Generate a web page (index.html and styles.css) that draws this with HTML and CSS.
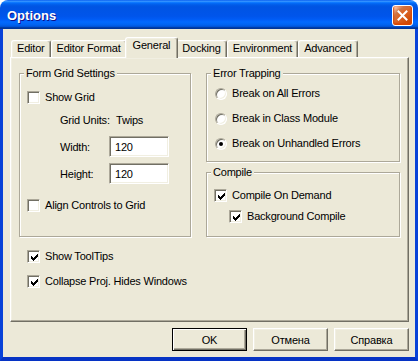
FILE: index.html
```html
<!DOCTYPE html>
<html lang="en">
<head>
    <meta charset="UTF-8">
    <title>Options</title>
    <link rel="stylesheet" href="styles.css">
</head>
<body>

    <div class="window">
        <div class="titlebar">
            <span class="title">Options</span>
            <button class="close-btn" aria-label="Close">
                <svg width="11" height="11" viewBox="0 0 11 11"><path d="M1.5 1.5l8 8M9.5 1.5l-8 8" stroke="#fff" stroke-width="2" stroke-linecap="square"/></svg>
            </button>
        </div>

        <div class="client">
            <div class="tabs">
                <div class="tab">Editor</div>
                <div class="tab">Editor Format</div>
                <div class="tab active">General</div>
                <div class="tab">Docking</div>
                <div class="tab">Environment</div>
                <div class="tab">Advanced</div>
            </div>

            <div class="panel">
                <div class="groups">
                    <fieldset class="group grid-settings">
                        <legend>Form Grid Settings</legend>
                        <label class="check show-grid"><span class="box"></span>Show Grid</label>
                        <div class="units"><span class="field-label">Grid Units:</span><span>Twips</span></div>
                        <div class="field width-field"><span class="field-label">Width:</span><span class="textbox">120</span></div>
                        <div class="field height-field"><span class="field-label">Height:</span><span class="textbox">120</span></div>
                        <label class="check align-grid"><span class="box"></span>Align Controls to Grid</label>
                    </fieldset>

                    <div class="right-col">
                        <fieldset class="group errors">
                            <legend>Error Trapping</legend>
                            <label class="radio"><span class="circle"></span>Break on All Errors</label>
                            <label class="radio"><span class="circle"></span>Break in Class Module</label>
                            <label class="radio"><span class="circle selected"></span>Break on Unhandled Errors</label>
                        </fieldset>

                        <fieldset class="group compile">
                            <legend>Compile</legend>
                            <label class="check on-demand"><span class="box"><svg width="7" height="7" viewBox="0 0 7 7"><path d="M6 0H7V3H6V4H5V5H4V6H3V7H2V6H1V5H0V2H1V3H2V4H3V3H4V2H5V1H6Z"/></svg></span>Compile On Demand</label>
                            <label class="check background"><span class="box"><svg width="7" height="7" viewBox="0 0 7 7"><path d="M6 0H7V3H6V4H5V5H4V6H3V7H2V6H1V5H0V2H1V3H2V4H3V3H4V2H5V1H6Z"/></svg></span>Background Compile</label>
                        </fieldset>
                    </div>
                </div>

                <label class="check tooltips"><span class="box"><svg width="7" height="7" viewBox="0 0 7 7"><path d="M6 0H7V3H6V4H5V5H4V6H3V7H2V6H1V5H0V2H1V3H2V4H3V3H4V2H5V1H6Z"/></svg></span>Show ToolTips</label>
                <label class="check collapse"><span class="box"><svg width="7" height="7" viewBox="0 0 7 7"><path d="M6 0H7V3H6V4H5V5H4V6H3V7H2V6H1V5H0V2H1V3H2V4H3V3H4V2H5V1H6Z"/></svg></span>Collapse Proj. Hides Windows</label>
            </div>

            <div class="buttons">
                <button class="btn default">OK</button>
                <button class="btn">Отмена</button>
                <button class="btn">Справка</button>
            </div>
        </div>
    </div>

</body>
</html>
```

FILE: styles.css
```css
body {
    margin: 0;
    background: #fff;
    font-family: "Liberation Sans", Arial, sans-serif;
    font-size: 11px;
    letter-spacing: -0.2px;
    color: #000;
}
.window {
    width: 418px;
    height: 361px;
}
.titlebar {
    height: 29px;
    display: flex;
    align-items: center;
    justify-content: space-between;
    padding: 0 5px 0 7px;
    box-sizing: border-box;
    border-radius: 8px 8px 0 0;
    background: linear-gradient(to bottom, #0058ee 0%, #3a93ff 4%, #288eff 6%, #127dff 8%, #036ffc 10%, #0262ee 14%, #0057e5 20%, #0054e3 24%, #0055eb 56%, #005bf5 66%, #026afe 76%, #0062ef 86%, #0052d6 92%, #0040ab 94%, #003092 100%);
}
.title {
    color: #fff;
    font-weight: bold;
    font-size: 13px;
    letter-spacing: 0;
    text-shadow: 1px 1px #0f1089;
    margin-top: 1px;
}
.close-btn {
    width: 21px;
    height: 21px;
    padding: 0;
    margin-top: 1px;
    display: flex;
    align-items: center;
    justify-content: center;
    border: 1px solid #fff;
    border-radius: 3px;
    background: radial-gradient(circle at 90% 90%, #cc4600 0%, #dc6527 55%, #cd7546 70%, #ffccb2 90%, #fff 100%);
    box-shadow: inset 0 -1px 2px 1px #da4600;
}
.client {
    height: 332px;
    box-sizing: border-box;
    background: #ece9d8;
    border: 3px solid #0842d8;
    border-top: none;
    border-bottom-width: 4px;
    border-bottom-color: #0633c4;
    padding: 8px 6px 0 7px;
}
.tabs {
    display: flex;
    align-items: flex-end;
    height: 20px;
    padding-left: 1px;
}
.tab {
    height: 17px;
    box-sizing: border-box;
    padding: 1px 5px 0;
    line-height: 13px;
    border-top: 1px solid #fff;
    border-left: 1px solid #fff;
    border-right: 1px solid #716f64;
    border-radius: 3px 3px 0 0;
    box-shadow: inset -1px 0 #aca899, inset 1px 1px #f1efe2;
    white-space: nowrap;
}
.tab.active {
    height: 21px;
    margin: 0 -2px -1px;
    padding: 1px 7px 0;
    background: #ece9d8;
    position: relative;
    z-index: 1;
}
.panel {
    height: 265px;
    box-sizing: border-box;
    border: 1px solid;
    border-color: #fff #716f64 #716f64 #fff;
    box-shadow: inset -1px -1px #aca899, inset 1px 1px #f1efe2;
    padding: 9px 0 0 8px;
}
.groups {
    display: grid;
    grid-template-columns: 172px 194px;
    column-gap: 15px;
    align-items: start;
}
.group {
    margin: 0;
    min-width: 0;
    border: 1px solid #aca899;
    box-shadow: inset 1px 1px #fff, 1px 1px #fff;
    padding: 0 0 0 7px;
}
.group legend {
    padding: 0 2px;
    margin-left: -3px;
    line-height: 13px;
    background: #ece9d8;
}
.check, .radio {
    display: flex;
    align-items: center;
    height: 13px;
    line-height: 13px;
    white-space: nowrap;
}
.box {
    width: 13px;
    height: 13px;
    box-sizing: border-box;
    margin-right: 5px;
    flex: none;
    display: flex;
    align-items: center;
    justify-content: center;
    background: #fff;
    border: 1px solid;
    border-color: #aca899 #fff #fff #aca899;
    box-shadow: inset 1px 1px #716f64, inset -1px -1px #f1efe2;
}
.box svg {
    display: block;
    margin: 1px 0 0 1px;
}
.circle {
    width: 12px;
    height: 12px;
    box-sizing: border-box;
    margin-right: 5px;
    flex: none;
    border-radius: 50%;
    background: #fff;
    border: 1px solid;
    border-color: #aca899 #fff #fff #aca899;
    box-shadow: inset 1px 1px #716f64, inset -1px -1px #f1efe2;
    display: flex;
    align-items: center;
    justify-content: center;
}
.circle.selected::after {
    content: "";
    width: 4px;
    height: 4px;
    border-radius: 50%;
    background: #000;
}
.grid-settings {
    padding-bottom: 24px;
}
.show-grid {
    margin-top: 11px;
}
.units {
    display: flex;
    margin-top: 10px;
    padding-left: 33px;
    line-height: 13px;
}
.field-label {
    width: 49px;
    flex: none;
}
.units .field-label {
    width: 56px;
}
.field {
    display: flex;
    align-items: center;
    padding-left: 33px;
}
.width-field {
    margin-top: 9px;
}
.height-field {
    margin-top: 6px;
}
.textbox {
    width: 60px;
    height: 21px;
    box-sizing: border-box;
    padding-left: 5px;
    display: flex;
    align-items: center;
    background: #fff;
    border: 1px solid;
    border-color: #aca899 #fff #fff #aca899;
    box-shadow: inset 1px 1px #716f64, inset -1px -1px #f1efe2;
}
.align-grid {
    margin-top: 15px;
}
.errors {
    padding-bottom: 11px;
}
.errors .radio {
    margin-top: 12px;
    padding-left: 1px;
}
.errors .radio:first-of-type {
    margin-top: 7px;
}
.compile {
    margin-top: 4px;
    padding-bottom: 13px;
}
.on-demand {
    margin-top: 10px;
}
.background {
    margin-top: 8px;
    margin-left: 15px;
}
.tooltips {
    margin: 13px 0 0 8px;
}
.collapse {
    margin: 12px 0 0 8px;
}
.buttons {
    display: flex;
    justify-content: flex-end;
    gap: 6px;
    margin-top: 6px;
}
.btn {
    width: 75px;
    height: 23px;
    padding: 0;
    font: inherit;
    letter-spacing: inherit;
    color: #000;
    background: #ece9d8;
    border: 1px solid;
    border-color: #fff #716f64 #716f64 #fff;
    box-shadow: inset -1px -1px #aca899, inset 1px 1px #f1efe2;
}
.btn.default {
    border-color: #000;
    box-shadow: inset 1px 1px #fff, inset -1px -1px #716f64, inset -2px -2px #aca899;
}
```
